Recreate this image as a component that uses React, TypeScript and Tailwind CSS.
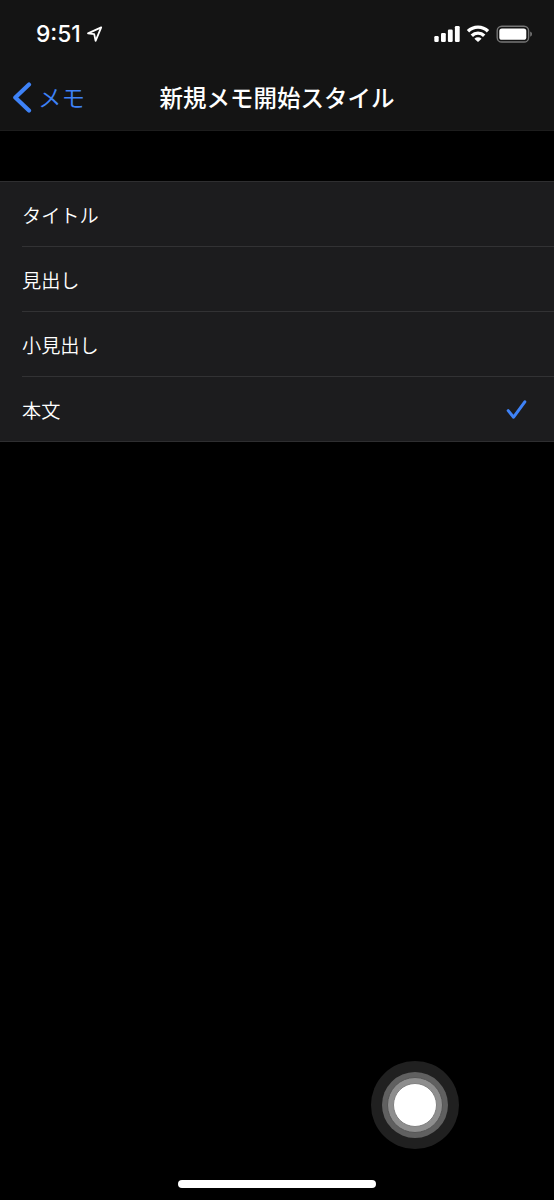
import { useState } from 'react'

const STYLES = ['タイトル', '見出し', '小見出し', '本文']

function StatusBar() {
  return (
    <div className="flex h-[67px] items-start justify-between pr-[21px] pl-[36px]">
      <div className="flex items-center pt-[20px]">
        <span className="font-['Inter','Liberation_Sans',sans-serif] text-[22.8px] leading-[28px] font-medium [font-feature-settings:'case']">
          9:51
        </span>
        <svg className="ml-[5px] h-[18px] w-[18px]" viewBox="0 0 18 18" fill="none">
          <path d="M15.2 2.4 2 8.4 8.2 9.1 9.6 15.8Z" stroke="currentColor" strokeWidth="1.8" strokeLinejoin="round" />
        </svg>
      </div>
      <div className="flex items-start pt-[25px]">
        <svg className="h-[18px] w-[27px]" viewBox="0 0 27 18" fill="currentColor">
          <rect x="1.3" y="11" width="4.4" height="6" rx="1.2" />
          <rect x="8" y="8" width="4.8" height="9" rx="1.2" />
          <rect x="14.9" y="4.5" width="4.8" height="12.5" rx="1.2" />
          <rect x="21.9" y="1" width="4.8" height="16" rx="1.2" />
        </svg>
        <svg className="ml-[6px] h-[18px] w-[24px]" viewBox="0 0 24 18" fill="none" stroke="currentColor" strokeWidth="3.4">
          <path d="M2 6.2a14.2 14.2 0 0 1 20 0" />
          <path d="M5.8 10.7a8.8 8.8 0 0 1 12.4 0" />
          <path d="M12 17 8.4 13.8a5.2 5.2 0 0 1 7.2 0Z" fill="currentColor" stroke="none" />
        </svg>
        <svg className="ml-[6px] h-[18px] w-[37px]" viewBox="0 0 37 18">
          <rect x="1.2" y="1.2" width="31.4" height="15.8" rx="4.6" fill="none" stroke="#757575" strokeWidth="1.4" />
          <rect x="3.3" y="3.4" width="27" height="11.4" rx="2.6" fill="currentColor" />
          <path d="M34.2 6.4a2.9 2.9 0 0 1 0 5.4Z" fill="#757575" />
        </svg>
      </div>
    </div>
  )
}

function NavBar() {
  return (
    <div className="grid h-[63px] grid-cols-[140px_1fr_140px] items-center pb-[2px]">
      <button className="flex items-center pl-[12px] text-[#3e82f7]">
        <svg className="h-[32px] w-[20px]" viewBox="0 0 20 32" fill="none">
          <path d="M17 2.6 3.3 15.6 17 28.6" stroke="currentColor" strokeWidth="4.2" strokeLinecap="round" strokeLinejoin="round" />
        </svg>
        <span className="mb-[2px] ml-[6px] text-[23.5px] leading-[32px] font-[350]">メモ</span>
      </button>
      <h1 className="pb-[2px] text-center text-[23.5px] leading-[32px] font-medium whitespace-nowrap">
        新規メモ開始スタイル
      </h1>
    </div>
  )
}

export default function App() {
  const [selected, setSelected] = useState('本文')

  return (
    <div className="relative h-[1200px] w-[554px] overflow-hidden bg-black font-['Noto_Sans_CJK_JP',sans-serif] text-white">
      <header className="h-[131px] border-b border-[#1d1d1d] bg-[#141414]">
        <StatusBar />
        <NavBar />
      </header>

      <ul className="mt-[50px] border-y border-[#2e2e30] bg-[#1c1c1e]">
        {STYLES.map((style, i) => (
          <li key={style} className="pl-[22px]">
            <button
              onClick={() => setSelected(style)}
              className={`flex w-full items-center justify-between pt-[2px] pr-[27px] text-left text-[19.2px] font-[350] ${
                i < STYLES.length - 1 ? 'h-[65px] border-b border-[#323234]' : 'h-[64px]'
              }`}
            >
              {style}
              {selected === style && (
                <svg className="h-[20px] w-[21px] text-[#3e82f7]" viewBox="0 0 21 20" fill="none">
                  <path d="M2.2 10.6 7.6 17.2 18.8 1.8" stroke="currentColor" strokeWidth="3" strokeLinecap="round" strokeLinejoin="round" />
                </svg>
              )}
            </button>
          </li>
        ))}
      </ul>

      {/* AssistiveTouch */}
      <div className="absolute top-[1061px] left-[371px] flex size-[88px] items-center justify-center rounded-full bg-[#202020]">
        <div className="flex size-[66px] items-center justify-center rounded-full bg-[#606060]">
          <div className="flex size-[56px] items-center justify-center rounded-full border border-[#565656] bg-[#8e8e8e]">
            <div className="size-[44px] rounded-full border border-[#808080] bg-white" />
          </div>
        </div>
      </div>

      {/* Home indicator */}
      <div className="absolute bottom-[12px] left-[178px] h-[8px] w-[198px] rounded-full bg-white" />
    </div>
  )
}
